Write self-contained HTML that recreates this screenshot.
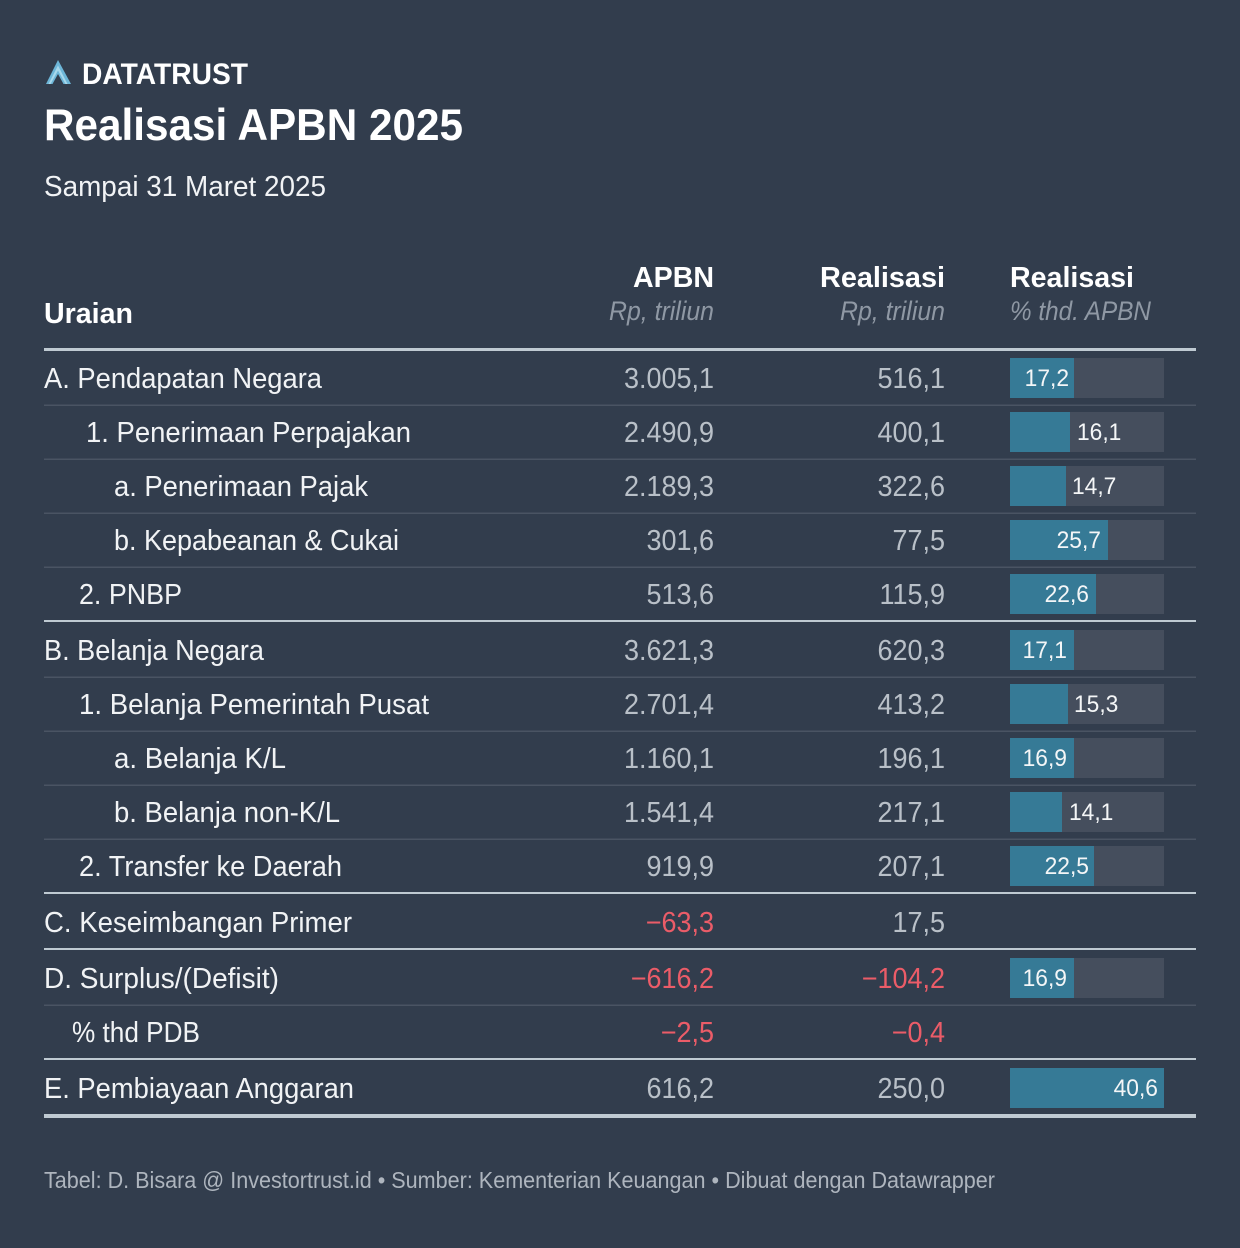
<!DOCTYPE html>
<html><head><meta charset="utf-8"><style>
html,body{margin:0;padding:0;background:#323d4d}
svg{display:block}
text{font-family:"Liberation Sans",sans-serif}
.l{font-size:28.5px;fill:#f1f3f5}
.v,.r{font-size:28.5px;text-anchor:end;transform-box:fill-box;transform-origin:100% 50%;transform:scaleX(.947)}
.v{fill:#b9c0c8}
.r{fill:#eb5c68}
.b{font-size:24px;fill:#f4f6f7;transform-box:fill-box;transform-origin:0 50%;transform:scaleX(.95)}
.e{text-anchor:end;transform-origin:100% 50%}
.h{font-size:29px;font-weight:bold;fill:#fff}
.s{font-size:27px;font-style:italic;fill:#8f98a4}
</style></head><body>
<svg xmlns="http://www.w3.org/2000/svg" width="1240" height="1248" viewBox="0 0 1240 1248">
<rect width="1240" height="1248" fill="#323d4d"/>
<path d="M58 60L71 84H63.500L58 74L52.500 84H46Z" fill="#6db6d8"/>
<path d="M58 65.500L67.500 84H65.500L58 70.500L50.500 84H48.500Z" fill="#a8d8ec"/>
<text x="82" y="84" font-size="29.500" font-weight="bold" fill="#fff" textLength="166" lengthAdjust="spacingAndGlyphs">DATATRUST</text>
<text x="44" y="140" font-size="44.500" font-weight="bold" fill="#fff" textLength="419" lengthAdjust="spacingAndGlyphs">Realisasi APBN 2025</text>
<text x="44" y="196" font-size="28.500" fill="#f1f3f5" textLength="282" lengthAdjust="spacingAndGlyphs">Sampai 31 Maret 2025</text>

<text class="h" x="44" y="323" textLength="89" lengthAdjust="spacingAndGlyphs">Uraian</text>
<text class="h" x="633" y="287" textLength="81" lengthAdjust="spacingAndGlyphs">APBN</text>
<text class="h" x="820" y="287" textLength="125" lengthAdjust="spacingAndGlyphs">Realisasi</text>
<text class="h" x="1010" y="287" textLength="124" lengthAdjust="spacingAndGlyphs">Realisasi</text>
<text class="s" x="609" y="320" textLength="105" lengthAdjust="spacingAndGlyphs">Rp, triliun</text>
<text class="s" x="840" y="320" textLength="105" lengthAdjust="spacingAndGlyphs">Rp, triliun</text>
<text class="s" x="1010" y="320" textLength="141" lengthAdjust="spacingAndGlyphs">% thd. APBN</text>

<g fill="#bfcad2">
<rect x="44" y="348" width="1152" height="3"/>
<rect x="44" y="620" width="1152" height="2"/>
<rect x="44" y="892" width="1152" height="2"/>
<rect x="44" y="948" width="1152" height="2"/>
<rect x="44" y="1058" width="1152" height="2"/>
<rect x="44" y="1114" width="1152" height="4"/>
</g>
<g fill="#4a5463">
<rect x="44" y="404.500" width="1152" height="1.500"/>
<rect x="44" y="458.500" width="1152" height="1.500"/>
<rect x="44" y="512.500" width="1152" height="1.500"/>
<rect x="44" y="566.500" width="1152" height="1.500"/>
<rect x="44" y="676.500" width="1152" height="1.500"/>
<rect x="44" y="730.500" width="1152" height="1.500"/>
<rect x="44" y="784.500" width="1152" height="1.500"/>
<rect x="44" y="838.500" width="1152" height="1.500"/>
<rect x="44" y="1004.500" width="1152" height="1.500"/>
</g>

<g fill="#454e5d">
<rect x="1010" y="358" width="154" height="40"/>
<rect x="1010" y="412" width="154" height="40"/>
<rect x="1010" y="466" width="154" height="40"/>
<rect x="1010" y="520" width="154" height="40"/>
<rect x="1010" y="574" width="154" height="40"/>
<rect x="1010" y="630" width="154" height="40"/>
<rect x="1010" y="684" width="154" height="40"/>
<rect x="1010" y="738" width="154" height="40"/>
<rect x="1010" y="792" width="154" height="40"/>
<rect x="1010" y="846" width="154" height="40"/>
<rect x="1010" y="958" width="154" height="40"/>
</g>
<g fill="#367a96">
<rect x="1010" y="358" width="64" height="40"/>
<rect x="1010" y="412" width="60" height="40"/>
<rect x="1010" y="466" width="56" height="40"/>
<rect x="1010" y="520" width="98" height="40"/>
<rect x="1010" y="574" width="86" height="40"/>
<rect x="1010" y="630" width="64" height="40"/>
<rect x="1010" y="684" width="58" height="40"/>
<rect x="1010" y="738" width="64" height="40"/>
<rect x="1010" y="792" width="52" height="40"/>
<rect x="1010" y="846" width="84" height="40"/>
<rect x="1010" y="958" width="64" height="40"/>
<rect x="1010" y="1068" width="154" height="40"/>
</g>

<text class="l" x="44" y="388" textLength="278" lengthAdjust="spacingAndGlyphs">A. Pendapatan Negara</text>
<text class="l" x="86" y="442" textLength="325" lengthAdjust="spacingAndGlyphs">1. Penerimaan Perpajakan</text>
<text class="l" x="114" y="496" textLength="254" lengthAdjust="spacingAndGlyphs">a. Penerimaan Pajak</text>
<text class="l" x="114" y="550" textLength="285" lengthAdjust="spacingAndGlyphs">b. Kepabeanan &amp; Cukai</text>
<text class="l" x="79" y="604" textLength="103" lengthAdjust="spacingAndGlyphs">2. PNBP</text>
<text class="l" x="44" y="660" textLength="220" lengthAdjust="spacingAndGlyphs">B. Belanja Negara</text>
<text class="l" x="79" y="714" textLength="350" lengthAdjust="spacingAndGlyphs">1. Belanja Pemerintah Pusat</text>
<text class="l" x="114" y="768" textLength="172" lengthAdjust="spacingAndGlyphs">a. Belanja K/L</text>
<text class="l" x="114" y="822" textLength="226" lengthAdjust="spacingAndGlyphs">b. Belanja non-K/L</text>
<text class="l" x="79" y="876" textLength="263" lengthAdjust="spacingAndGlyphs">2. Transfer ke Daerah</text>
<text class="l" x="44" y="932" textLength="308" lengthAdjust="spacingAndGlyphs">C. Keseimbangan Primer</text>
<text class="l" x="44" y="988" textLength="235" lengthAdjust="spacingAndGlyphs">D. Surplus/(Defisit)</text>
<text class="l" x="72" y="1042" textLength="128" lengthAdjust="spacingAndGlyphs">% thd PDB</text>
<text class="l" x="44" y="1098" textLength="310" lengthAdjust="spacingAndGlyphs">E. Pembiayaan Anggaran</text>

<text class="v" x="714" y="388">3.005,1</text><text class="v" x="945" y="388">516,1</text>
<text class="v" x="714" y="442">2.490,9</text><text class="v" x="945" y="442">400,1</text>
<text class="v" x="714" y="496">2.189,3</text><text class="v" x="945" y="496">322,6</text>
<text class="v" x="714" y="550">301,6</text><text class="v" x="945" y="550">77,5</text>
<text class="v" x="714" y="604">513,6</text><text class="v" x="945" y="604">115,9</text>
<text class="v" x="714" y="660">3.621,3</text><text class="v" x="945" y="660">620,3</text>
<text class="v" x="714" y="714">2.701,4</text><text class="v" x="945" y="714">413,2</text>
<text class="v" x="714" y="768">1.160,1</text><text class="v" x="945" y="768">196,1</text>
<text class="v" x="714" y="822">1.541,4</text><text class="v" x="945" y="822">217,1</text>
<text class="v" x="714" y="876">919,9</text><text class="v" x="945" y="876">207,1</text>
<text class="r" x="714" y="932">−63,3</text><text class="v" x="945" y="932">17,5</text>
<text class="r" x="714" y="988">−616,2</text><text class="r" x="945" y="988">−104,2</text>
<text class="r" x="714" y="1042">−2,5</text><text class="r" x="945" y="1042">−0,4</text>
<text class="v" x="714" y="1098">616,2</text><text class="v" x="945" y="1098">250,0</text>

<text class="b e" x="1069" y="386">17,2</text>
<text class="b" x="1077" y="440">16,1</text>
<text class="b" x="1072" y="494">14,7</text>
<text class="b e" x="1101" y="548">25,7</text>
<text class="b e" x="1089" y="602">22,6</text>
<text class="b e" x="1067" y="658">17,1</text>
<text class="b" x="1074" y="712">15,3</text>
<text class="b e" x="1067" y="766">16,9</text>
<text class="b" x="1069" y="820">14,1</text>
<text class="b e" x="1089" y="874">22,5</text>
<text class="b e" x="1067" y="986">16,9</text>
<text class="b e" x="1158" y="1096">40,6</text>

<text x="44" y="1188" font-size="23" fill="#aeb5be" textLength="951" lengthAdjust="spacingAndGlyphs">Tabel: D. Bisara @ Investortrust.id • Sumber: Kementerian Keuangan • Dibuat dengan Datawrapper</text>
</svg>
</body></html>
